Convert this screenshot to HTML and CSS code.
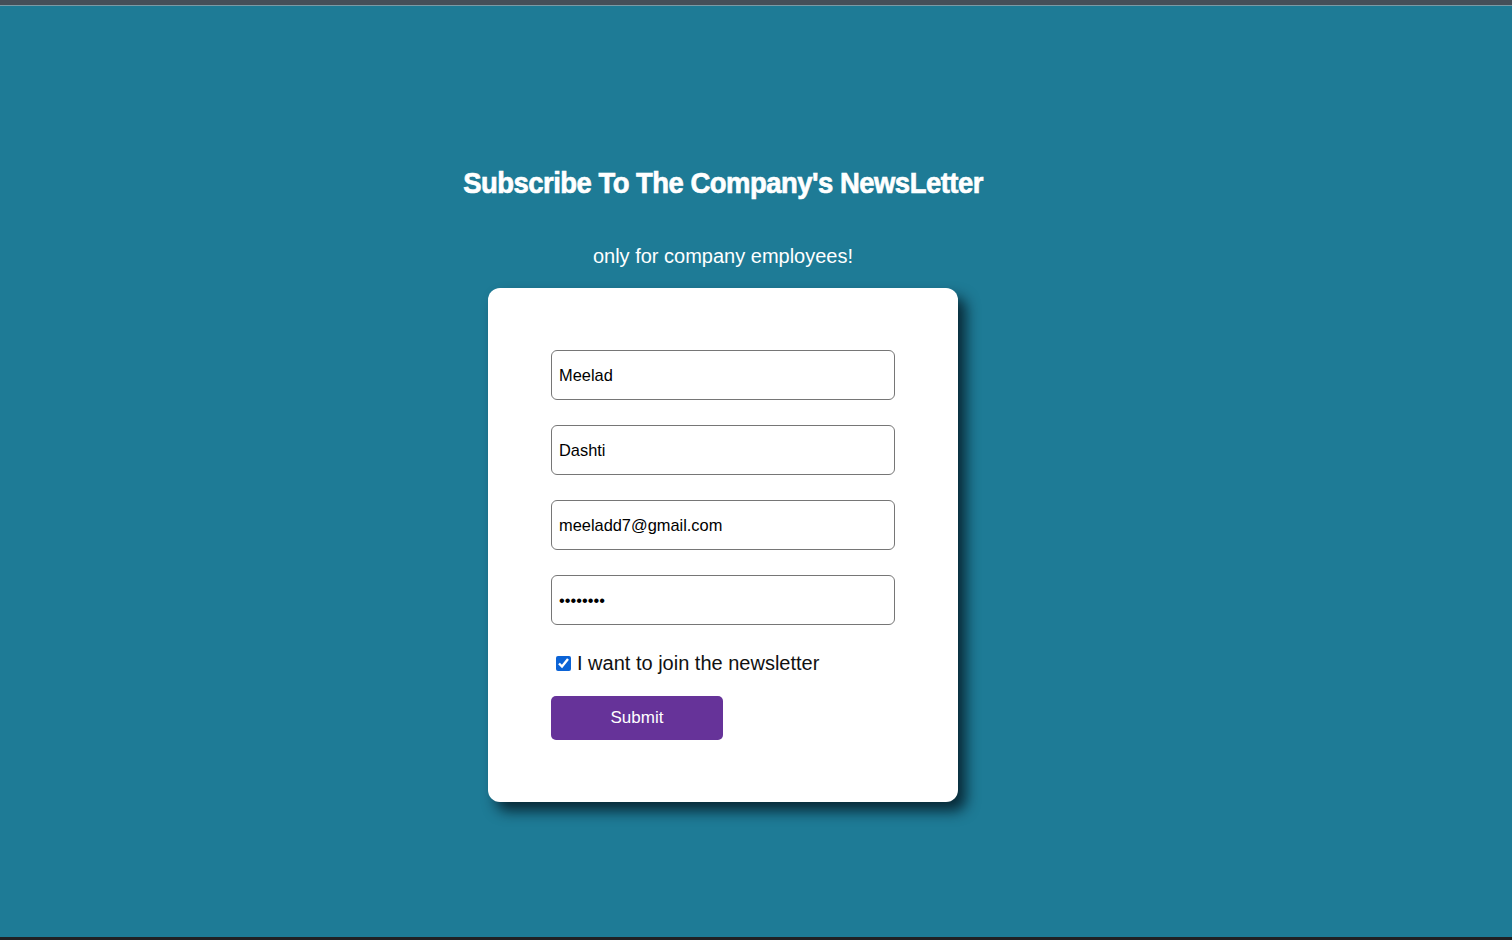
FILE: index.html
```html
<!DOCTYPE html>
<html lang="en">
<head>
<meta charset="utf-8">
<title>Newsletter</title>
<link rel="stylesheet" href="styles.css">
</head>
<body>
<div class="topbar"></div>
<main class="page">
  <h1 class="title">Subscribe To The Company's NewsLetter</h1>
  <p class="subtitle">only for company employees!</p>
  <form class="card">
    <input class="field" type="text" value="Meelad">
    <input class="field" type="text" value="Dashti">
    <input class="field" type="email" value="meeladd7@gmail.com">
    <input class="field" type="password" value="password">
    <label class="check">
      <input type="checkbox" checked>
      <span>I want to join the newsletter</span>
    </label>
    <button class="submit" type="button">Submit</button>
  </form>
</main>
<div class="bottombar"></div>
</body>
</html>
```

FILE: styles.css
```css
html, body {
  margin: 0;
  padding: 0;
  height: 100%;
}
body {
  background: #1e7b96;
  font-family: "Liberation Sans", Arial, sans-serif;
  display: flex;
  flex-direction: column;
  overflow: hidden;
}
.topbar {
  height: 5px;
  background: #454f59;
  border-bottom: 1px solid #7a9aa6;
  flex: none;
}
.bottombar {
  height: 3px;
  background: #202124;
  flex: none;
}
.page {
  flex: 1;
  display: flex;
  flex-direction: column;
  align-items: center;
  padding-right: 66px;
}
.title {
  margin: 157px 0 0;
  color: #fff;
  font-family: "Liberation Sans", Arial, sans-serif;
  font-weight: bold;
  font-size: 30px;
  line-height: 40px;
  letter-spacing: -0.55px;
  -webkit-text-stroke: 0.7px #fff;
  transform: scaleX(0.915);
  white-space: nowrap;
}
.subtitle {
  margin: 41px 0 0;
  color: #fff;
  font-size: 20px;
  line-height: 24px;
}
.card {
  margin-top: 20px;
  box-sizing: border-box;
  width: 470px;
  height: 514px;
  background: #fff;
  border-radius: 12px;
  box-shadow: 8px 9px 14px rgba(3, 20, 30, 0.8);
  padding: 62px 63px;
  display: flex;
  flex-direction: column;
}
.field {
  box-sizing: border-box;
  width: 344px;
  height: 50px;
  flex: none;
  margin: 0 0 25px;
  border: 1px solid #767676;
  border-radius: 6px;
  padding: 0 7px;
  font-family: "Liberation Sans", Arial, sans-serif;
  font-size: 16.4px;
  color: #000;
  background: #fff;
}
.check {
  display: flex;
  align-items: center;
  margin-top: 2px;
  font-size: 20px;
  color: #111;
  height: 24px;
}
.check input {
  width: 15px;
  height: 15px;
  margin: 0 6px 0 5px;
  accent-color: #0b63d6;
}
.submit {
  margin-top: 20px;
  width: 172px;
  height: 45px;
  border: none;
  border-radius: 5px;
  background: #663399;
  color: #fff;
  font-family: "Liberation Sans", Arial, sans-serif;
  font-size: 17px;
  cursor: pointer;
}
```
